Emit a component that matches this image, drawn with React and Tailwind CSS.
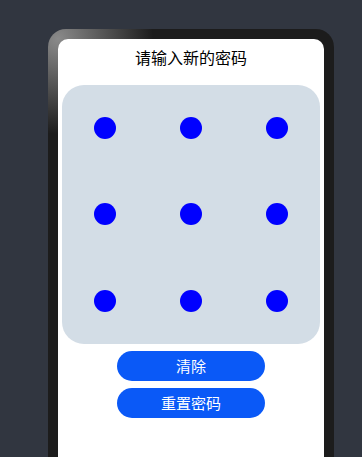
import React from "react";

const dots = [0, 1, 2, 3, 4, 5, 6, 7, 8];

const App = () => {
  return (
    <div
      className="w-[362px] h-[457px] overflow-hidden bg-[#313640] pt-[29px] pl-[48px]"
      style={{ fontFamily: '"Noto Sans CJK SC", "Noto Sans", sans-serif' }}
    >
      <div className="w-[286px] h-[520px] rounded-[18px] p-[10px] bg-[radial-gradient(circle_at_10px_10px,#8a8a8a,#1c1c1c_95px)]">
        <div className="h-full bg-white rounded-[10px] pt-[8px] flex flex-col items-center">
          <h1 className="text-[16px] leading-[20px] text-black">请输入新的密码</h1>
          <div className="mt-[18px] w-[258px] h-[259px] rounded-[22px] bg-[#d3dde6] grid grid-cols-3 grid-rows-3">
            {dots.map((d) => (
              <div key={d} className="flex items-center justify-center">
                <div className="w-[22px] h-[22px] rounded-full bg-[#0000ff]" />
              </div>
            ))}
          </div>
          <div className="mt-[7px] flex flex-col gap-[7px]">
            <button className="w-[148px] h-[30px] rounded-full bg-[#0a59f7] text-white text-[15px]">
              清除
            </button>
            <button className="w-[148px] h-[30px] rounded-full bg-[#0a59f7] text-white text-[15px]">
              重置密码
            </button>
          </div>
        </div>
      </div>
    </div>
  );
};

export default App;
